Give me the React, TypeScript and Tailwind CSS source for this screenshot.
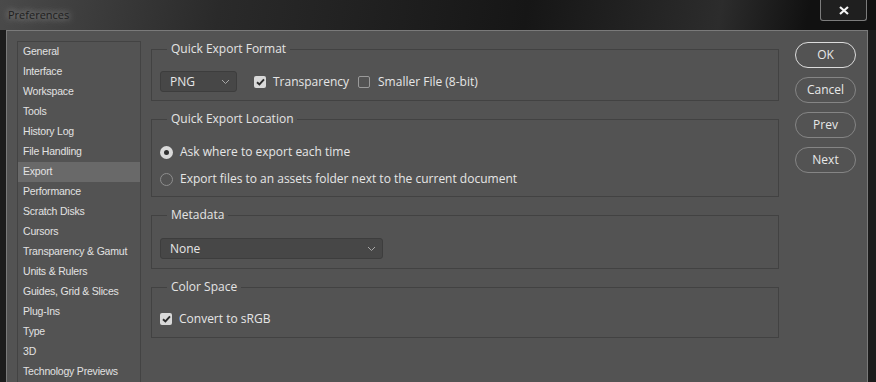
import React from "react";

const sideItems = [
  "General",
  "Interface",
  "Workspace",
  "Tools",
  "History Log",
  "File Handling",
  "Export",
  "Performance",
  "Scratch Disks",
  "Cursors",
  "Transparency & Gamut",
  "Units & Rulers",
  "Guides, Grid & Slices",
  "Plug-Ins",
  "Type",
  "3D",
  "Technology Previews",
];

function Chevron() {
  return (
    <svg width="9" height="6" viewBox="0 0 9 6" className="shrink-0">
      <path d="M1 1l3.5 3.5L8 1" fill="none" stroke="#a8a8a8" strokeWidth="1" />
    </svg>
  );
}

function Check({ checked }: { checked: boolean }) {
  if (!checked)
    return <span className="block w-[12px] h-[12px] rounded-[2px] border border-[#9a9a9a] shrink-0" />;
  return (
    <span className="w-[12px] h-[12px] rounded-[2px] bg-[#d9d9d9] flex items-center justify-center shrink-0">
      <svg width="9" height="8" viewBox="0 0 9 8">
        <path d="M1 4.2l2.4 2.3L8 1.3" fill="none" stroke="#2c2c2c" strokeWidth="1.9" />
      </svg>
    </span>
  );
}

function Radio({ on }: { on: boolean }) {
  if (!on) return <span className="block w-[13px] h-[13px] rounded-full border border-[#8e8e8e] shrink-0" />;
  return (
    <span className="w-[13px] h-[13px] rounded-full bg-[#dadada] flex items-center justify-center shrink-0">
      <span className="w-[5px] h-[5px] rounded-full bg-[#303030]" />
    </span>
  );
}

function Group({ title, children, className }: { title: string; children: React.ReactNode; className?: string }) {
  return (
    <fieldset className={"border border-[#424242] px-[8px] " + (className ?? "")}>
      <legend className="ml-[7px] px-[4px] text-[12px] leading-[18px] text-[#e4e4e4]">{title}</legend>
      {children}
    </fieldset>
  );
}

function Btn({ label, primary }: { label: string; primary?: boolean }) {
  return (
    <button
      className={
        "w-[61px] h-[26px] rounded-full text-[12px] text-[#e8e8e8] flex items-center justify-center " +
        (primary ? "border-[1.5px] border-[#dcdcdc]" : "border border-[#858585]")
      }
    >
      {label}
    </button>
  );
}

export default function App() {
  return (
    <div
      className="w-[876px] h-[382px] overflow-hidden flex flex-col bg-[#1c1c1c]"
      style={{ fontFamily: '"Open Sans", "Noto Sans", sans-serif' }}
    >
      {/* title bar */}
      <div className="h-[30px] shrink-0 flex items-start relative bg-[linear-gradient(100deg,#4a4a4a_0%,#2a2a2a_25%,#161616_60%,#2c2c2c_82%,#111111_92%)]">
        <div className="ml-[6px] mt-[6px] px-[2px] text-[11px] leading-[18px] text-[#1e1e1e] [text-shadow:0_0_6px_#9a9a9a,0_0_10px_#8a8a8a]">
          Preferences
        </div>
        <div className="ml-auto mr-[9px] w-[47px] h-[21px] border border-t-0 border-[#7c7c7c] rounded-b-[3px] bg-[#1f1f1f] flex items-center justify-center">
          <svg width="10" height="9" viewBox="0 0 10 9">
            <path d="M1 1l8 7M9 1L1 8" stroke="#f4f4f4" strokeWidth="2.2" />
          </svg>
        </div>
      </div>

      {/* body */}
      <div className="flex-1 ml-[6px] mr-[8px] bg-[#535353] border-t border-l border-r border-[#7a7a7a] flex items-start overflow-hidden">
        {/* sidebar */}
        <div
          className="ml-[10px] mt-[10px] w-[124px] h-[360px] border border-[#434343] shrink-0"
          style={{ fontFamily: '"Liberation Sans", Arial, sans-serif' }}
        >
          {sideItems.map((s) => (
            <div
              key={s}
              className={
                "h-[20px] pl-[5px] flex items-center text-[10.5px] tracking-[-0.2px] text-[#e2e2e2] " +
                (s === "Export" ? "bg-[#696969]" : "")
              }
            >
              {s}
            </div>
          ))}
        </div>

        {/* main */}
        <div className="ml-[10px] mt-[9px] w-[628px] flex flex-col gap-[9px] shrink-0 text-[12px] text-[#e6e6e6]">
          <Group title="Quick Export Format" className="pb-[8px]">
            <div className="mt-[13px] flex items-center h-[21px]">
              <div className="w-[77px] h-[21px] rounded-[3px] bg-[#474747] border border-[#3d3d3d] flex items-center justify-between pl-[9px] pr-[6px]">
                <span>PNG</span>
                <Chevron />
              </div>
              <span className="ml-[17px] flex">
                <Check checked />
              </span>
              <span className="ml-[7px]">Transparency</span>
              <span className="ml-[9px] flex">
                <Check checked={false} />
              </span>
              <span className="ml-[8px]">Smaller File (8-bit)</span>
            </div>
          </Group>

          <Group title="Quick Export Location" className="pb-[7px]">
            <div className="mt-[14px] flex flex-col gap-[7px]">
              <div className="h-[20px] flex items-center gap-[7px]">
                <Radio on />
                <span>Ask where to export each time</span>
              </div>
              <div className="h-[20px] flex items-center gap-[7px]">
                <Radio on={false} />
                <span>Export files to an assets folder next to the current document</span>
              </div>
            </div>
          </Group>

          <Group title="Metadata" className="pb-[9px]">
            <div className="mt-[14px] w-[223px] h-[21px] rounded-[3px] bg-[#474747] border border-[#3d3d3d] flex items-center justify-between pl-[9px] pr-[6px]">
              <span>None</span>
              <Chevron />
            </div>
          </Group>

          <Group title="Color Space" className="pb-[8px]">
            <div className="mt-[13px] h-[20px] flex items-center gap-[7px]">
              <Check checked />
              <span>Convert to sRGB</span>
            </div>
          </Group>
        </div>

        {/* buttons */}
        <div className="ml-[16px] mt-[11px] flex flex-col gap-[9px] shrink-0">
          <Btn label="OK" primary />
          <Btn label="Cancel" />
          <Btn label="Prev" />
          <Btn label="Next" />
        </div>
      </div>
    </div>
  );
}
